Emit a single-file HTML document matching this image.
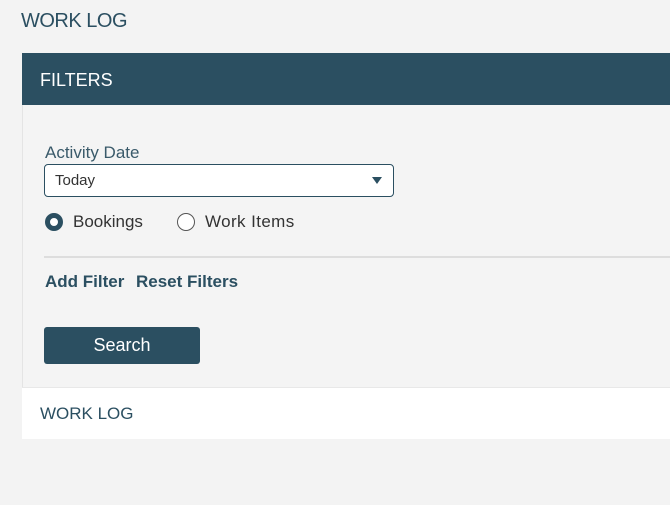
<!DOCTYPE html>
<html><head><style>
*{margin:0;padding:0;box-sizing:border-box}
body{width:670px;height:505px;background:#f3f3f3;font-family:"Liberation Sans",sans-serif;position:relative;overflow:hidden;color:#2b4f61}
.a{position:absolute;white-space:nowrap}
</style></head><body>
<div class="a" style="left:21px;top:10px;font-size:20px;color:#2b4f61;letter-spacing:-0.5px">WORK LOG</div>
<div class="a" style="left:22px;top:53px;width:660px;height:386px;border:1px solid #e4e4e4;background:#f4f4f4"></div>
<div class="a" style="left:22px;top:53px;width:660px;height:52px;background:#2b4f61"></div>
<div class="a" style="left:40px;top:70px;font-size:18px;color:#fff">FILTERS</div>
<div class="a" style="left:45px;top:143px;font-size:17px;color:#3a5a6a">Activity Date</div>
<div class="a" style="left:44px;top:164px;width:350px;height:33px;background:#fff;border:1.5px solid #2b4f61;border-radius:4px"></div>
<div class="a" style="left:55px;top:172px;font-size:15px;color:#333">Today</div>
<div class="a" style="left:372px;top:177px;width:0;height:0;border-left:5px solid transparent;border-right:5px solid transparent;border-top:7px solid #2b4f61"></div>
<div class="a" style="left:45px;top:213px;width:18px;height:18px;border-radius:50%;border:5px solid #2b4f61;background:#fff"></div>
<div class="a" style="left:73px;top:212px;font-size:17px;color:#333">Bookings</div>
<div class="a" style="left:177px;top:213px;width:18px;height:18px;border-radius:50%;border:1px solid #555;background:#fff"></div>
<div class="a" style="left:205px;top:212px;font-size:17px;color:#333;letter-spacing:0.4px">Work Items</div>
<div class="a" style="left:44px;top:256px;width:626px;height:2px;background:#ddd"></div>
<div class="a" style="left:45px;top:272px;font-size:17px;font-weight:bold;color:#2b4f61">Add Filter</div>
<div class="a" style="left:136px;top:272px;font-size:17px;font-weight:bold;color:#2b4f61">Reset Filters</div>
<div class="a" style="left:44px;top:327px;width:156px;height:37px;background:#2b4f61;border-radius:3px;color:#fff;font-size:18px;text-align:center;line-height:37px">Search</div>
<div class="a" style="left:22px;top:387px;width:660px;height:52px;background:#fff;border-top:1px solid #e8e8e8"></div>
<div class="a" style="left:40px;top:404px;font-size:17px;color:#2b4f61">WORK LOG</div>
</body></html>
